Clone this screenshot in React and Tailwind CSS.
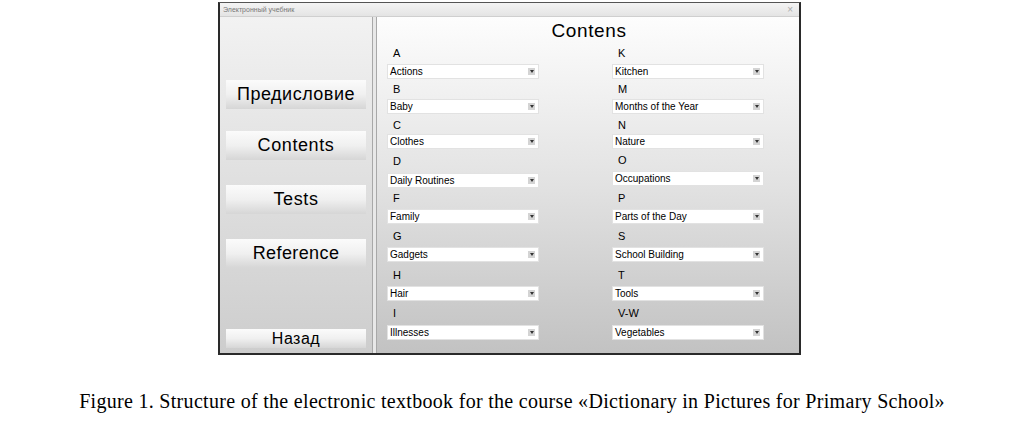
import React from "react";

const left = [
  { l: "A", w: "Actions", cls: "h-[22px]" },
  { l: "B", w: "Baby", cls: "h-[20px]" },
  { l: "C", w: "Clothes", cls: "h-[18px] mt-[2px]" },
  { l: "D", w: "Daily Routines", cls: "h-[24px]" },
  { l: "F", w: "Family", cls: "h-[21px]" },
  { l: "G", w: "Gadgets", cls: "h-[22px] mt-[1px]" },
  { l: "H", w: "Hair", cls: "h-[22px] mt-[2px]" },
  { l: "I", w: "Illnesses", cls: "h-[24px]" },
];

const right = [
  { l: "K", w: "Kitchen", cls: "h-[22px]" },
  { l: "M", w: "Months of the Year", cls: "h-[20px]" },
  { l: "N", w: "Nature", cls: "h-[18px] mt-[2px]" },
  { l: "O", w: "Occupations", cls: "h-[22px]" },
  { l: "P", w: "Parts of the Day", cls: "h-[22px] mt-[1px]" },
  { l: "S", w: "School Building", cls: "h-[22px] mt-[1px]" },
  { l: "T", w: "Tools", cls: "h-[22px] mt-[2px]" },
  { l: "V-W", w: "Vegetables", cls: "h-[24px]" },
];

function Select({ text }) {
  return (
    <div className="flex h-[15px] items-center justify-between border border-[#e2e2e2] bg-white pl-[2px] pr-[3px]">
      <span className="text-[10px] leading-[12px] text-black">{text}</span>
      <span className="flex h-[7px] w-[7px] items-center justify-center bg-[#d4d4d4]">
        <svg width="4" height="3" viewBox="0 0 4 3">
          <path d="M0 0 L4 0 L2 3 Z" fill="#333" />
        </svg>
      </span>
    </div>
  );
}

function Column({ items }) {
  return (
    <div className="flex w-[152px] flex-col">
      {items.map((it) => (
        <div key={it.l} className="flex flex-col">
          <div className={`flex items-center pl-[6px] text-[11px] text-black ${it.cls}`}>{it.l}</div>
          <Select text={it.w} />
        </div>
      ))}
    </div>
  );
}

function NavButton({ children, cls }) {
  return (
    <div
      className={`mx-[6px] flex items-center justify-center bg-gradient-to-b from-[#fbfbfb] via-[#f0f0f0] to-[#d6d6d6] text-black ${cls}`}
    >
      {children}
    </div>
  );
}

export default function App() {
  return (
    <div
      className="flex h-[421px] w-[1024px] flex-col bg-white"
      style={{ fontFamily: '"Liberation Sans", Arial, sans-serif' }}
    >
      <div className="ml-[218px] mt-[2px] flex h-[353px] w-[583px] flex-col border-b-2 border-l-2 border-r-2 border-t border-[#2a2a2a] border-t-[#555]">
        <div className="flex h-[13px] items-center justify-between bg-gradient-to-b from-[#f4f4f4] to-[#e4e4e4] pl-[3px] pr-[6px]">
          <span className="text-[7px] leading-[8px] text-[#777]">Электронный учебник</span>
          <span className="text-[10px] leading-[10px] text-[#aaa]">×</span>
        </div>
        <div className="flex flex-1 border-t border-[#cfcfcf]">
          <div className="flex w-[152px] flex-col bg-gradient-to-b from-[#f2f2f2] to-[#cdcdcd] pt-[63px] pb-[5px]">
            <NavButton cls="h-[29px] text-[18px] tracking-[0.5px]">Предисловие</NavButton>
            <NavButton cls="mt-[22px] h-[29px] text-[18px] tracking-[0.6px]">Contents</NavButton>
            <NavButton cls="mt-[25px] h-[29px] text-[18px] tracking-[0.6px]">Tests</NavButton>
            <NavButton cls="mt-[25px] h-[29px] text-[18px] tracking-[0.4px]">Reference</NavButton>
            <div className="flex-1" />
            <NavButton cls="h-[19px] text-[16px] tracking-[0.5px]">Назад</NavButton>
          </div>
          <div className="w-[5px] border-l border-r border-[#a8a8a8] bg-[#e8e8e8]" />
          <div className="flex flex-1 flex-col bg-gradient-to-b from-[#fdfdfd] via-[#e2e2e2] to-[#c2c2c2] pl-[10px]">
            <div className="flex h-[25px] justify-center pt-[3px] pr-[8px] text-[19px] leading-[22px] tracking-[0.6px] text-black">
              Contens
            </div>
            <div className="flex gap-[73px]">
              <Column items={left} />
              <Column items={right} />
            </div>
          </div>
        </div>
      </div>
      <div
        className="mt-[36px] text-center text-[20px] leading-[20px] tracking-[0.3px] text-black"
        style={{ fontFamily: '"Liberation Serif", "Times New Roman", serif' }}
      >
        Figure 1. Structure of the electronic textbook for the course «Dictionary in Pictures for Primary School»
      </div>
    </div>
  );
}
